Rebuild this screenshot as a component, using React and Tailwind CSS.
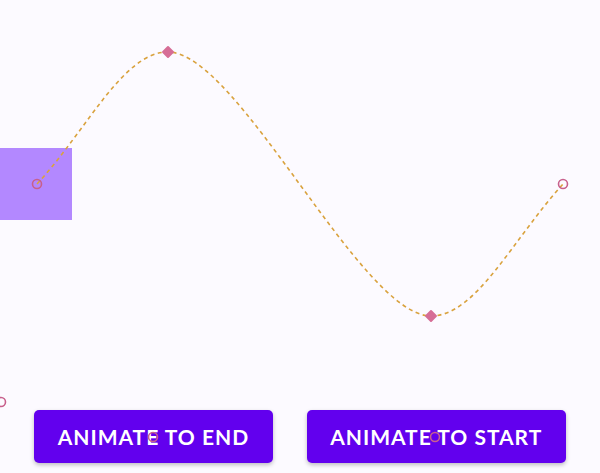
import React from 'react';

const curve =
  'M37 184 C87 130, 123 52, 168 52 C238 52, 361 316, 431 316 C476 316, 513 239, 563 184';

const Marker = ({ x, y }) => (
  <circle cx={x} cy={y} r="4.5" fill="none" stroke="#c8608c" strokeWidth="1.6" />
);

const Diamond = ({ x, y }) => (
  <rect x={x - 4.5} y={y - 4.5} width="9" height="9" rx="1" fill="#d66d96" transform={`rotate(45 ${x} ${y})`} />
);

export default function App() {
  return (
    <div className="relative w-[600px] h-[473px] overflow-hidden bg-[#fcfaff] flex flex-col justify-end" style={{ fontFamily: 'Lato, "Open Sans", sans-serif' }}>
      {/* Animated box */}
      <div className="absolute left-0 top-[148px] w-[72px] h-[72px] bg-[#b388ff]" />

      {/* Actions */}
      <div className="flex justify-center gap-[34px] pb-[10px]">
        <button className="h-[53px] px-[23.5px] rounded-[5px] bg-[#6200ee] text-white text-[21px] font-bold tracking-[1px] shadow-[0_2px_4px_rgba(0,0,0,0.25)]">
          ANIMATE TO END
        </button>
        <button className="h-[53px] px-[23.5px] rounded-[5px] bg-[#6200ee] text-white text-[21px] font-bold tracking-[1px] shadow-[0_2px_4px_rgba(0,0,0,0.25)]">
          ANIMATE TO START
        </button>
      </div>

      {/* Motion path overlay */}
      <svg className="absolute inset-0 pointer-events-none" width="600" height="473" viewBox="0 0 600 473">
        <path d={curve} fill="none" stroke="#d9a23e" strokeWidth="1.6" strokeDasharray="4 3.5" />
        <Marker x={37} y={184} />
        <Marker x={563} y={184} />
        <Marker x={1} y={402} />
        <Marker x={153} y={437} />
        <Marker x={435} y={437} />
        <Diamond x={168} y={52} />
        <Diamond x={431} y={316} />
      </svg>
    </div>
  );
}
